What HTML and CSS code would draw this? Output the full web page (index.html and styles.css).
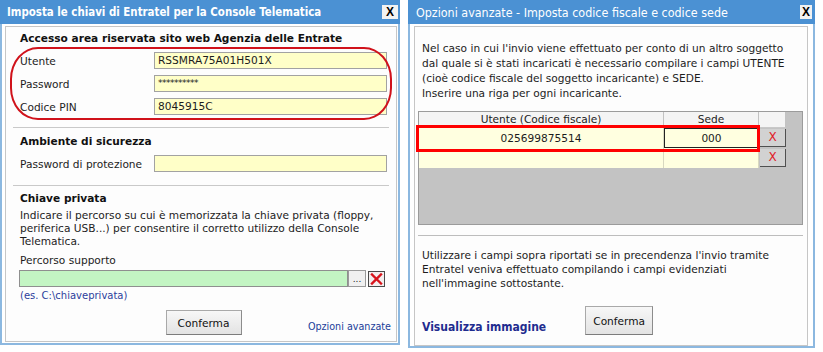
FILE: index.html
```html
<!DOCTYPE html>
<html lang="it">
<head>
    <meta charset="UTF-8">
    <meta name="viewport" content="width=device-width, initial-scale=1.0">
    <title>Chiavi Entratel</title>
    <link rel="stylesheet" href="styles.css">
</head>
<body>
    <div class="screen">
        <div class="window window-keys">
            <div class="titlebar">
                <span class="title-text title-bold">Imposta le chiavi di Entratel per la Console Telematica</span>
                <span class="close-btn">X</span>
            </div>
            <div class="window-body">
                <div class="panel">
                    <div class="group group-access">
                        <h3 class="group-title">Accesso area riservata sito web Agenzia delle Entrate</h3>
                        <div class="highlight">
                            <div class="field-row"><span class="field-label">Utente</span><span class="field-input">RSSMRA75A01H501X</span></div>
                            <div class="field-row"><span class="field-label">Password</span><span class="field-input field-secret">**********</span></div>
                            <div class="field-row"><span class="field-label">Codice PIN</span><span class="field-input">8045915C</span></div>
                        </div>
                    </div>
                    <div class="group group-security">
                        <h3 class="group-title">Ambiente di sicurezza</h3>
                        <div class="field-row"><span class="field-label">Password di protezione</span><span class="field-input"></span></div>
                    </div>
                    <div class="group group-key">
                        <h3 class="group-title">Chiave privata</h3>
                        <p class="group-text">Indicare il percorso su cui è memorizzata la chiave privata (floppy,<br>periferica USB...) per consentire il corretto utilizzo della Console<br>Telematica.</p>
                        <div class="path-label">Percorso supporto</div>
                        <div class="path-row">
                            <span class="path-input"></span>
                            <span class="browse-btn">...</span>
                            <span class="clear-btn">
                                <svg width="17" height="16" viewBox="0 0 17 16">
                                    <rect x="0.5" y="0.5" width="16" height="15" fill="#f3eeee" stroke="#4a4a4a"/>
                                    <path d="M4 3.5 L13 12.5 M13 3.5 L4 12.5" stroke="#d8141c" stroke-width="2.4" stroke-linecap="square"/>
                                </svg>
                            </span>
                        </div>
                        <div class="path-hint">(es. C:\chiaveprivata)</div>
                        <div class="panel-footer">
                            <span></span>
                            <button class="btn btn-keys">Conferma</button>
                            <a class="link-small">Opzioni avanzate</a>
                        </div>
                    </div>
                </div>
            </div>
        </div>

        <div class="window window-options">
            <div class="titlebar">
                <span class="title-text title-light">Opzioni avanzate - Imposta codice fiscale e codice sede</span>
                <span class="close-btn">X</span>
            </div>
            <div class="window-body">
                <div class="panel panel-options">
                    <p class="intro">Nel caso in cui l'invio viene effettuato per conto di un altro soggetto<br>dal quale si è stati incaricati è necessario compilare i campi UTENTE<br>(cioè codice fiscale del soggetto incaricante) e SEDE.<br>Inserire una riga per ogni incaricante.</p>
                    <div class="grid">
                        <div class="grid-row grid-head">
                            <div class="cell col-cf">Utente (Codice fiscale)</div>
                            <div class="cell col-sede">Sede</div>
                            <div class="cell col-del"></div>
                        </div>
                        <div class="grid-row grid-data marked">
                            <div class="cell col-cf">025699875514</div>
                            <div class="cell col-sede focused">000</div>
                            <div class="cell col-del"><span class="del-btn">X</span></div>
                        </div>
                        <div class="grid-row grid-data">
                            <div class="cell col-cf"></div>
                            <div class="cell col-sede"></div>
                            <div class="cell col-del"><span class="del-btn">X</span></div>
                        </div>
                    </div>
                    <div class="divider"></div>
                    <p class="note">Utilizzare i campi sopra riportati se in precendenza l'invio tramite<br>Entratel veniva effettuato compilando i campi evidenziati<br>nell'immagine sottostante.</p>
                    <div class="options-footer">
                        <a class="link-strong">Visualizza immagine</a>
                        <button class="btn btn-options">Conferma</button>
                    </div>
                </div>
            </div>
        </div>
    </div>
</body>
</html>
```

FILE: styles.css
```css
body {
    margin: 0;
    background: #ffffff;
    font-family: "DejaVu Sans", Verdana, sans-serif;
    font-size: 10.6px;
    color: #1c1c1c;
}
.screen {
    display: flex;
    gap: 8px;
    align-items: flex-start;
}

/* finestre */
.window {
    display: flex;
    flex-direction: column;
    box-sizing: border-box;
}
.window-keys { width: 400px; height: 345px; }
.window-options { width: 407px; height: 348px; }
.titlebar {
    height: 24px;
    flex: none;
    background: #4b91d3;
    display: flex;
    align-items: center;
    justify-content: space-between;
    padding: 0 2px 0 7px;
}
.title-text {
    color: #ffffff;
    white-space: nowrap;
}
.title-bold {
    font-weight: bold;
    font-size: 11.4px;
    font-stretch: condensed;
}
.title-light {
    font-size: 12.4px;
    font-stretch: condensed;
    padding-top: 1px;
    padding-left: 1px;
}
.close-btn {
    width: 16px;
    height: 14px;
    background: #f2f2f2;
    color: #000;
    font-family: "Liberation Sans", Arial, sans-serif;
    font-weight: bold;
    font-size: 12px;
    line-height: 14px;
    text-align: center;
}
.window-options .close-btn { margin-right: 1px; width: 12px; }
.window-body {
    flex: 1;
    display: flex;
    border: 2px solid #8cb8e0;
    border-top: 0;
    background: #ffffff;
}
.window-keys .window-body { padding: 2px 1px 1px 3px; }
.window-options .window-body { padding: 2px 5px 0 4px; }
.panel {
    flex: 1;
    border: 1px solid #c6c6c6;
    background: #fdfdfd;
    display: flex;
    flex-direction: column;
}

/* gruppi finestra chiavi */
.group {
    margin: 0 7px;
    padding: 0 2px 0 7px;
}
.group-access { padding-top: 4px; padding-bottom: 9px; border-bottom: 1px solid #c9c9c9; }
.group-security { padding-top: 6px; padding-bottom: 10px; border-bottom: 1px solid #c9c9c9; }
.group-key { padding-top: 5px; }
.group-title {
    margin: 0;
    font-size: 10.6px;
    line-height: 14px;
    font-weight: bold;
    color: #111;
}
.highlight {
    position: relative;
    margin-top: 4px;
}
.highlight::before {
    content: "";
    position: absolute;
    left: -10px;
    right: -5px;
    top: -2px;
    bottom: -2px;
    border: 2px solid #d0121b;
    border-radius: 28px / 32px;
    pointer-events: none;
}
.field-row {
    height: 23px;
    display: flex;
    align-items: center;
}
.group-security .field-row { margin-top: 4px; }
.field-label {
    width: 134px;
    flex: none;
}
.field-input {
    flex: 1;
    height: 17px;
    box-sizing: border-box;
    background: #ffffc8;
    border: 1px solid #a2a2a2;
    padding-left: 3px;
    line-height: 15px;
}
.field-secret { letter-spacing: -0.5px; font-size: 9px; }
.group-text {
    margin: 4px 0 0;
    line-height: 13px;
}
.path-label {
    margin-top: 5px;
    line-height: 14px;
}
.path-row {
    display: flex;
    align-items: center;
    margin-top: 3px;
    margin-left: -1px;
    height: 17px;
}
.path-input {
    width: 329px;
    height: 17px;
    box-sizing: border-box;
    background: #c3f5c3;
    border: 1px solid #8f8f8f;
}
.browse-btn {
    width: 18px;
    height: 17px;
    box-sizing: border-box;
    border: 1px solid #9a9a9a;
    background: #f0f0f0;
    font-size: 9px;
    line-height: 17px;
    text-align: center;
}
.clear-btn {
    margin-left: 2px;
    display: flex;
}
.path-hint {
    margin-top: 2px;
    line-height: 14px;
    font-size: 10px;
    color: #2c3e9c;
}
.panel-footer {
    display: grid;
    grid-template-columns: 1fr auto 1fr;
    align-items: end;
    margin-top: 7px;
}
.btn {
    font-family: "DejaVu Sans", Verdana, sans-serif;
    font-size: 10.6px;
    color: #111;
    background: linear-gradient(#f7f7f7, #e3e3e3);
    border: 1px solid #a9a9a9;
    border-bottom-color: #7c7c7c;
    border-right-color: #8c8c8c;
    padding: 0;
}
.btn-keys { width: 76px; height: 25px; }
.link-small {
    justify-self: end;
    color: #22409a;
    font-size: 9.6px;
    margin-right: -4px;
    line-height: 14px;
    margin-bottom: 1px;
}

/* finestra opzioni */
.panel-options { padding: 0 4px 0 3px; }
.intro {
    margin: 14px 0 0;
    padding-left: 4px;
    line-height: 15px;
}
.grid {
    margin-top: 10px;
    height: 114px;
    box-sizing: border-box;
    background: #c3c3c3;
    border: 1px solid #9b9b9b;
}
.grid-row {
    display: flex;
    position: relative;
}
.cell {
    box-sizing: border-box;
    text-align: center;
}
.col-cf { width: 245px; }
.col-sede { width: 95px; }
.col-del { width: 27px; }
.grid-head .cell {
    height: 16px;
    line-height: 15px;
    background: #f4f4f4;
    border-right: 1px solid #c2c2c2;
    border-bottom: 1px solid #c8c8c8;
}
.grid-data .col-cf,
.grid-data .col-sede {
    height: 20px;
    line-height: 20px;
    background: #ffffe0;
    border-right: 1px solid #d8d8c0;
}
.grid-data .focused {
    border: 1px solid #222;
    line-height: 18px;
}
.col-del { display: flex; }
.del-btn {
    flex: 1;
    margin: 1px 0 1px 1px;
    background: #d2d2d2;
    border-right: 1px solid #505050;
    border-bottom: 1px solid #505050;
    color: #e0202a;
    font-size: 12px;
    line-height: 17px;
    text-align: center;
}
.marked { z-index: 1; }
.marked::after {
    content: "";
    position: absolute;
    left: -3px;
    top: -3px;
    width: 344px;
    height: 27px;
    box-sizing: border-box;
    border: 3px solid #ff0000;
    pointer-events: none;
}
.divider {
    margin-top: 10px;
    border-top: 1px solid #bdbdbd;
}
.note {
    margin: 12px 0 0;
    padding-left: 4px;
    line-height: 14px;
}
.options-footer {
    display: flex;
    align-items: flex-end;
    gap: 39px;
    margin-top: 16px;
    padding-left: 4px;
}
.link-strong {
    color: #1f2c8f;
    font-weight: bold;
    font-size: 12px;
    font-stretch: condensed;
    line-height: 14px;
    margin-bottom: 1px;
}
.btn-options { width: 68px; height: 29px; }
```
